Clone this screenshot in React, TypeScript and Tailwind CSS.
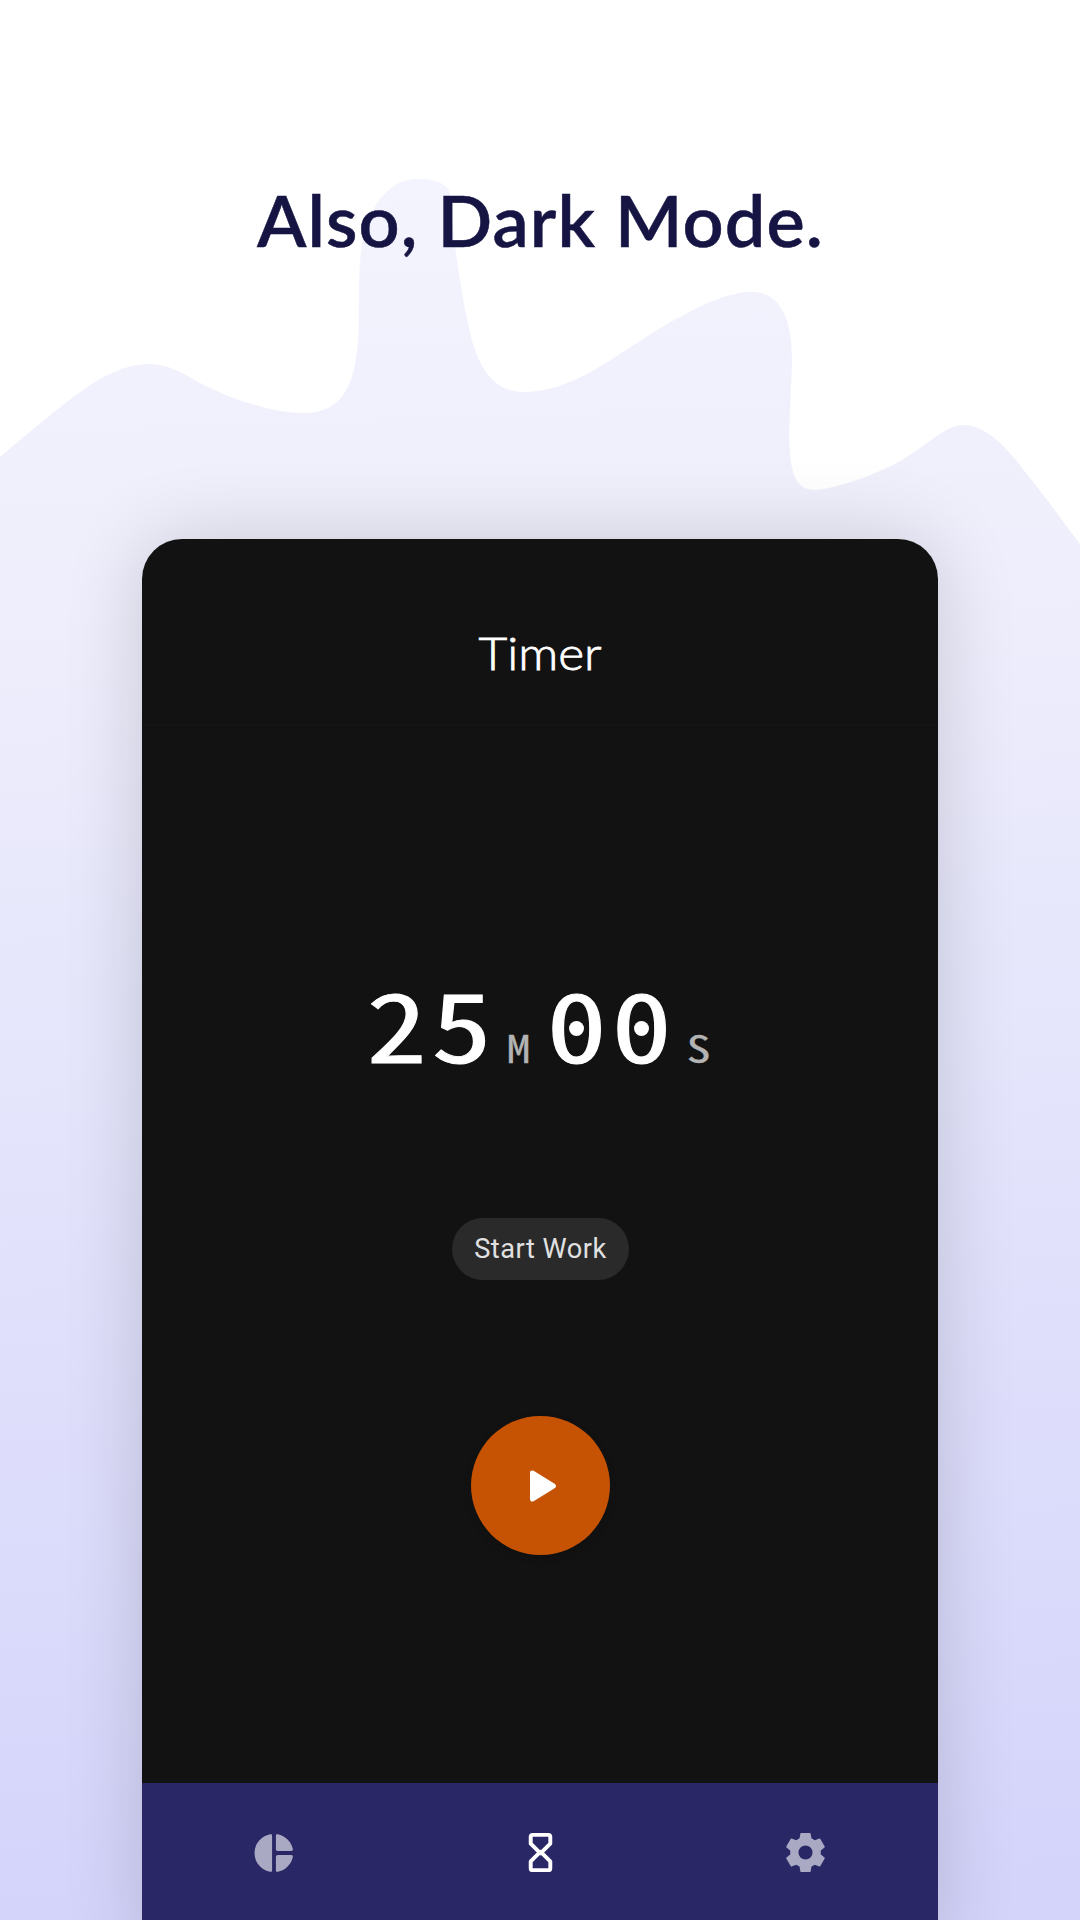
function Backdrop() {
  return (
    <svg className="absolute inset-0 h-full w-full" viewBox="0 0 1080 1920" aria-hidden="true">
      <defs>
        <linearGradient id="haze" x1="0" y1="180" x2="60" y2="1920" gradientUnits="userSpaceOnUse">
          <stop offset="0" stopColor="#f4f4fe" />
          <stop offset="0.25" stopColor="#eeeefc" />
          <stop offset="1" stopColor="#d4d4fb" />
        </linearGradient>
      </defs>
      <path
        fill="url(#haze)"
        d="M0 457 C27 434 58 408 83 390 C104 375 127 364 148 364 C172 364 188 377 208 387 C242 403 276 413 303 413 C340 413 358 391 358.800 320 C359.500 295 358 270 361.600 247 C365 225 370 215 375 206 C387 188 400 179 417 179 C437 179 449 184 450 195 C452 215 453 235 456 253 C460 280 463 302 468 323 C476 365 492 392 523 392 C546 392 570 384 592 371 C616 358 638 341 660.500 328 C700 305 727 292 752 292 C778 292 792 315 792 360 C792 375 790.500 390 790.300 403 C789.500 420 789 435 789.700 447 C791 476 797 490 815.500 490 C828 490 870 478 902 460 C930 443 946 425 963.500 425 C982 425 1001 440 1022 468 C1042 492 1061 519 1080 544 V1920 H0 Z"
      />
    </svg>
  );
}

function Digit({ value }: { value: string }) {
  return (
    <span className="relative flex w-[65px] justify-center">
      <span className="inline-block scale-x-[1.27] text-[95px] font-medium text-white [-webkit-text-stroke:0.9px_white]">
        {value}
      </span>
      {value === "0" && (
        <span className="absolute left-[25px] top-[55px] h-[15px] w-[15px] rounded-full bg-white" />
      )}
    </span>
  );
}

function Unit({ label }: { label: string }) {
  return (
    <span className="flex w-[50px] justify-center">
      <span className="inline-block scale-x-[1.27] text-[38px] text-[#b3b3b3] [-webkit-text-stroke:0.3px_#b3b3b3]">{label}</span>
    </span>
  );
}

function Countdown() {
  return (
    <div className="mt-[240px] flex h-[111px] items-baseline justify-center pl-[8px] font-['Noto_Sans_Mono_CJK_SC','Liberation_Mono',monospace] leading-[111px]">
      <Digit value="2" />
      <Digit value="5" />
      <Unit label="M" />
      <Digit value="0" />
      <Digit value="0" />
      <Unit label="S" />
    </div>
  );
}

const toothAngles = [0, 60, 120, 180, 240, 300];

function GearIcon() {
  return (
    <svg className="h-[47px] w-[47px]" viewBox="0 0 24 24">
      <circle cx="12" cy="12" r="5.7" fill="none" stroke="currentColor" strokeWidth="4.2" />
      {toothAngles.map((angle) => (
        <path
          key={angle}
          fill="currentColor"
          transform={`rotate(${angle} 12 12)`}
          d="M9.700 2h4.600q.25 0 .3.3L15.100 5.100l1 1.200H7.900l1-1.200.5-2.800q.05-.3.3-.3z"
        />
      ))}
    </svg>
  );
}

function NavBar() {
  return (
    <nav className="flex h-[172px] shrink-0 bg-[#2a2766] pt-[46px] text-[#aaa9c4]">
      <button className="flex h-[47px] flex-1 items-center justify-center pr-[2px]" aria-label="Statistics">
        <svg className="h-[46px] w-[46px]" viewBox="0 0 24 24" fill="currentColor">
          <path d="M11 3v18q0 1.050-.95.84A10 10 0 0 1 10.050 2.160Q11 1.950 11 3zM13 3v7q0 1 1 1h7q1.050 0 .84-.95A10 10 0 0 0 13.950 2.160Q13 1.950 13 3zM13 14v7q0 1.050.95.84A10 10 0 0 0 21.840 13.950Q22.050 13 21 13h-7q-1 0-1 1z" />
        </svg>
      </button>
      <button className="flex h-[47px] flex-1 justify-center pr-px text-white" aria-label="Timer">
        <svg className="h-[47px] w-[47px]" viewBox="0 0 24 24" fill="none" stroke="currentColor" strokeWidth="2" strokeLinejoin="round">
          <path d="M8 3h8q1 0 1 1v3.500L12 12.400 7 7.500V4q0-1 1-1zM12 11.600l5 4.900V20q0 1-1 1H8q-1 0-1-1v-3.500z" />
        </svg>
      </button>
      <button className="flex h-[47px] flex-1 justify-center" aria-label="Settings">
        <GearIcon />
      </button>
    </nav>
  );
}

export default function App() {
  return (
    <div className="relative h-[1920px] w-[1080px] overflow-hidden bg-white">
      <Backdrop />
      <main className="relative flex flex-col items-center">
        <h1 className="mt-[170px] h-[98px] whitespace-nowrap pl-px font-['Lato',sans-serif] text-[72px] font-semibold leading-[98px] tracking-[1.1px] text-[#151443] [-webkit-text-stroke:0.5px_#151443]">
          Also, Dark Mode.
        </h1>
        <section className="mt-[271px] flex h-[1416px] w-[796px] flex-col overflow-hidden rounded-[40px] bg-[#121212] shadow-[0_0_80px_rgba(0,0,0,0.16)]">
          <header className="flex h-[187px] shrink-0 justify-center border-b-2 border-[#141414] pt-[86px]">
            <h2 className="scale-x-[1.08] font-['Lato',sans-serif] text-[46px] font-light leading-[56px] text-white [-webkit-text-stroke:0.8px_white]">
              Timer
            </h2>
          </header>
          <div className="flex flex-1 flex-col items-center">
            <Countdown />
            <button className="mt-[141px] flex h-[62px] w-[177px] items-center justify-center rounded-full bg-[#2a2a2a] pl-px font-['Roboto',sans-serif] text-[27.2px] tracking-[0.5px] text-[#e1e1e1]">
              Start Work
            </button>
            <button
              className="mt-[136px] flex h-[139px] w-[139px] items-center justify-center rounded-full bg-[#c65204] shadow-[0_3px_8px_rgba(0,0,0,0.12)]"
              aria-label="Start"
            >
              <svg className="ml-[6px] h-[32px] w-[28px]" viewBox="0 0 28 32" fill="white">
                <path d="M1 3C1 .5 3 0 5 1L26 14q2 2 0 4L5 31C3 32.200 1 31.500 1 29z" />
              </svg>
            </button>
          </div>
          <NavBar />
        </section>
      </main>
    </div>
  );
}
